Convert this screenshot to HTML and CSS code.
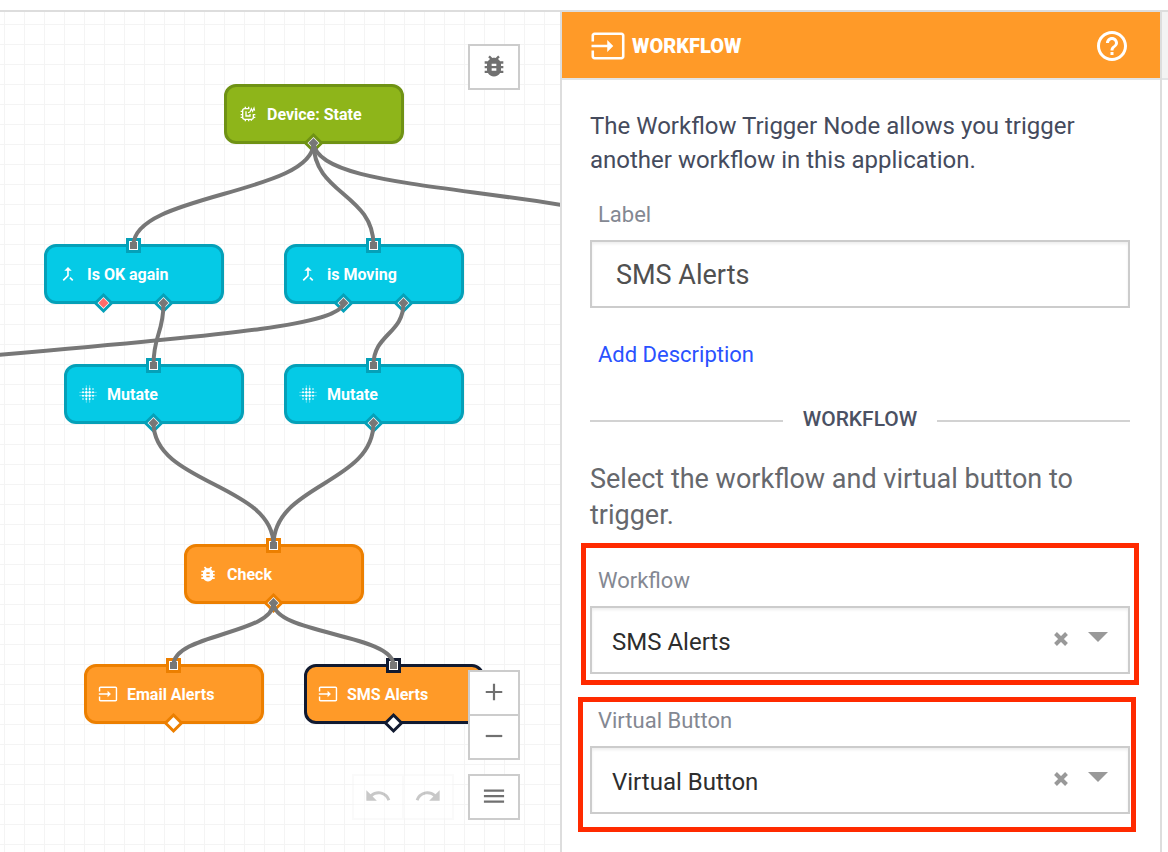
FILE: index.html
```html
<!DOCTYPE html>
<html lang="en">
<head>
<meta charset="utf-8">
<title>Workflow editor</title>
<link rel="stylesheet" href="styles.css">
</head>
<body>
<svg class="defs" aria-hidden="true">
  <symbol id="i-input" viewBox="0 0 24 24"><path d="M21 3H3c-1.100 0-2 .9-2 2v4h1.700V5.200c0-.3.200-.5.500-.5h17.600c.3 0 .5.200.5.500v13.600c0 .3-.2.500-.5.500H3.200a.5.500 0 0 1-.5-.5V15H1v4c0 1.100.9 2 2 2h18c1.100 0 2-.9 2-2V5c0-1.100-.9-2-2-2zM11.500 16l4-4-4-4v3.200H1v1.700h10.500z"/></symbol>
  <symbol id="i-bug" viewBox="0 0 24 24"><path d="M20 8h-2.810c-.45-.78-1.070-1.450-1.820-1.960L17 4.410 15.590 3l-2.170 2.170C12.960 5.060 12.490 5 12 5s-.96.060-1.410.170L8.410 3 7 4.410l1.620 1.630C7.880 6.550 7.260 7.220 6.810 8H4v2h2.090c-.05.330-.09.660-.09 1v1H4v2h2v1c0 .340.040.670.090 1H4v2h2.810c1.040 1.790 2.970 3 5.190 3s4.150-1.210 5.190-3H20v-2h-2.090c.05-.33.090-.66.090-1v-1h2v-2h-2v-1c0-.34-.04-.67-.09-1H20V8zm-6 8h-4v-2h4v2zm0-4h-4v-2h4v2z"/></symbol>
  <symbol id="i-merge" viewBox="0 0 24 24"><path d="M17 20.410L18.410 19 15 15.590 13.590 17 17 20.410zM7.500 8H11v5.590L5.590 19 7 20.410l6-6V8h3.500L12 3.500 7.500 8z"/></symbol>
  <symbol id="i-grid" viewBox="0 0 24 24"><g fill="#fff"><circle cx="10" cy="10" r="1.500"/><circle cx="14" cy="10" r="1.500"/><circle cx="10" cy="14" r="1.500"/><circle cx="14" cy="14" r="1.500"/><circle cx="6" cy="6" r="1"/><circle cx="10" cy="6" r="1.200"/><circle cx="14" cy="6" r="1.200"/><circle cx="18" cy="6" r="1"/><circle cx="6" cy="10" r="1.200"/><circle cx="18" cy="10" r="1.200"/><circle cx="6" cy="14" r="1.200"/><circle cx="18" cy="14" r="1.200"/><circle cx="6" cy="18" r="1"/><circle cx="10" cy="18" r="1.200"/><circle cx="14" cy="18" r="1.200"/><circle cx="18" cy="18" r="1"/></g><path fill="none" stroke="#fff" stroke-width=".7" opacity=".7" d="M1.500 10h21M1.500 14h21M10 1.500v21M14 1.500v21"/></symbol>
  <symbol id="i-chip" viewBox="0 0 24 24"><g fill="none" stroke="#fff" stroke-width="2"><path d="M14 4H7a3 3 0 0 0-3 3v10a3 3 0 0 0 3 3h10a3 3 0 0 0 3-3v-5"/><path d="M9 8v7h6v-3M8 1v3M13 1v3M8 20v3M13 20v3M17 20v2M1 8h3M1 13h3M1 17h3M20 13h3M20 17h3"/><path stroke-width="1.700" d="M12 10l3-1 2-5 2 4 2-5 1 4"/></g></symbol>
  <symbol id="i-help" viewBox="0 0 24 24"><path d="M11 18h2v-2h-2v2zm1-16C6.480 2 2 6.480 2 12s4.480 10 10 10 10-4.480 10-10S17.520 2 12 2zm0 18c-4.410 0-8-3.590-8-8s3.590-8 8-8 8 3.590 8 8-3.590 8-8 8zm0-14c-2.210 0-4 1.790-4 4h2c0-1.100.9-2 2-2s2 .9 2 2c0 2-3 1.750-3 5h2c0-2.250 3-2.500 3-5 0-2.210-1.790-4-4-4z"/></symbol>
  <symbol id="i-undo" viewBox="0 0 24 24"><path d="M12.500 8c-2.650 0-5.050.99-6.900 2.600L2 7v9h9l-3.620-3.620c1.390-1.160 3.160-1.880 5.120-1.880 3.540 0 6.550 2.310 7.600 5.500l2.370-.78C21.080 11.030 17.150 8 12.500 8z"/></symbol>
  <symbol id="i-redo" viewBox="0 0 24 24"><path d="M18.400 10.600C16.550 8.990 14.150 8 11.500 8c-4.650 0-8.580 3.030-9.960 7.220L3.900 16c1.050-3.190 4.050-5.500 7.600-5.500 1.950 0 3.730.72 5.120 1.880L13 16h9V7l-3.600 3.600z"/></symbol>
  <symbol id="s-port" viewBox="0 0 15 15"><path stroke="none" d="M0 0h15v15H0z"/><path fill="#fff" d="M3 3h9v9H3z"/><path fill="#777" d="M4 4h7v7H4z"/></symbol>
</svg>

<header class="topbar"></header>
<div class="app">
  <main class="canvas">
    <div class="node green" style="left:224px;top:72px"><svg class="node-icon"><use href="#i-chip"/></svg>Device: State</div>
    <div class="node blue" style="left:44px;top:232px"><svg class="node-icon"><use href="#i-merge"/></svg>Is OK again</div>
    <div class="node blue" style="left:284px;top:232px"><svg class="node-icon"><use href="#i-merge"/></svg>is Moving</div>
    <div class="node blue" style="left:64px;top:352px"><svg class="node-icon"><use href="#i-grid"/></svg>Mutate</div>
    <div class="node blue" style="left:284px;top:352px"><svg class="node-icon"><use href="#i-grid"/></svg>Mutate</div>
    <div class="node orange" style="left:184px;top:532px"><svg class="node-icon"><use href="#i-bug"/></svg>Check</div>
    <div class="node orange" style="left:84px;top:652px"><svg class="node-icon"><use href="#i-input"/></svg>Email Alerts</div>
    <div class="node orange selected" style="left:304px;top:652px"><svg class="node-icon"><use href="#i-input"/></svg>SMS Alerts</div>

    <svg class="wires" aria-hidden="true">
      <defs>
        <path id="d-out" d="M0-8 8 0 0 8-8 0z" stroke-width="3"/>
        <path id="d-in" d="M0-5 5 0 0 5-5 0z"/>
      </defs>
      <g fill="#05a0b8">
        <use href="#s-port" x="126" y="226" width="15" height="15"/>
        <use href="#s-port" x="366" y="226" width="15" height="15"/>
        <use href="#s-port" x="146" y="346" width="15" height="15"/>
        <use href="#s-port" x="366" y="346" width="15" height="15"/>
      </g>
      <g fill="#ec7f00">
        <use href="#s-port" x="266" y="526" width="15" height="15"/>
        <use href="#s-port" x="166" y="646" width="15" height="15"/>
      </g>
      <g fill="#111a30"><use href="#s-port" x="386" y="646" width="15" height="15"/></g>
      <g fill="#fff">
        <use href="#d-out" x="313.500" y="131" stroke="#6f9214"/>
        <g stroke="#05a0b8">
          <use href="#d-out" x="103.500" y="291"/><use href="#d-out" x="163.500" y="291"/>
          <use href="#d-out" x="343.500" y="291"/><use href="#d-out" x="403.500" y="291"/>
          <use href="#d-out" x="153.500" y="411"/><use href="#d-out" x="373.500" y="411"/>
        </g>
        <use href="#d-out" x="273.500" y="591" stroke="#ec7f00"/>
        <use href="#d-out" x="173.500" y="711" stroke="#ec7f00"/>
        <use href="#d-out" x="393.500" y="711" stroke="#111a30"/>
      </g>
      <use href="#d-in" x="103.500" y="291" fill="#ff6b6b"/>
      <g fill="#777">
        <use href="#d-in" x="313.500" y="131"/><use href="#d-in" x="163.500" y="291"/>
        <use href="#d-in" x="343.500" y="291"/><use href="#d-in" x="403.500" y="291"/>
        <use href="#d-in" x="153.500" y="411"/><use href="#d-in" x="373.500" y="411"/>
        <use href="#d-in" x="273.500" y="591"/>
      </g>
      <g fill="none" stroke="#777" stroke-width="4">
        <path d="M313.500 131C313.500 182 133.500 182 133.500 233"/>
        <path d="M313.500 131C313.500 182 373.500 182 373.500 233"/>
        <path d="M313.500 131C317 168 430 172 562 193"/>
        <path d="M343.500 291C340 312 240 322 -2 343"/>
        <path d="M163.500 291C163.500 322 153.500 322 153.500 353"/>
        <path d="M403.500 291C403.500 322 373.500 322 373.500 353"/>
        <path d="M153.500 411C153.500 472 273.500 472 273.500 533"/>
        <path d="M373.500 411C373.500 472 273.500 472 273.500 533"/>
        <path d="M273.500 591C273.500 622 173.500 622 173.500 653"/>
        <path d="M273.500 591C273.500 622 393.500 622 393.500 653"/>
      </g>
    </svg>

    <div class="tools tools-top">
      <button class="tool" aria-label="Debug"><svg class="tool-icon bug"><use href="#i-bug"/></svg></button>
    </div>
    <div class="tools tools-bottom">
      <div class="stack">
        <button class="tool" aria-label="Zoom in"><svg class="tool-icon" viewBox="0 0 24 24"><path d="M10.800 3h2.400v7.800H21v2.400h-7.800V21h-2.400v-7.800H3v-2.400h7.800z"/></svg></button>
        <button class="tool" aria-label="Zoom out"><svg class="tool-icon" viewBox="0 0 24 24"><path d="M3 10.800h18v2.400H3z"/></svg></button>
      </div>
      <div class="tool-row">
        <div class="history">
          <button class="tool" disabled aria-label="Undo"><svg class="history-icon"><use href="#i-undo"/></svg></button>
          <button class="tool" disabled aria-label="Redo"><svg class="history-icon"><use href="#i-redo"/></svg></button>
        </div>
        <button class="tool" aria-label="Menu"><svg class="tool-icon" viewBox="0 0 24 24"><path d="M1 5h22v2.300H1zM1 11h22v2.300H1zM1 17h22v2.300H1z"/></svg></button>
      </div>
    </div>
  </main>

  <aside class="panel">
    <header class="panel-head">
      <svg class="head-icon"><use href="#i-input"/></svg>
      <h1 class="panel-title">WORKFLOW</h1>
      <button class="help" aria-label="Help"><svg class="help-icon"><use href="#i-help"/></svg></button>
    </header>
    <div class="panel-body">
      <p class="intro">The Workflow Trigger Node allows you trigger another workflow in this application.</p>
      <div class="field">
        <label class="label" for="node-label">Label</label>
        <input class="box text-input" id="node-label" type="text" value="SMS Alerts">
      </div>
      <a class="link" href="#">Add Description</a>
      <h2 class="divider">WORKFLOW</h2>
      <p class="hint">Select the workflow and virtual button to trigger.</p>
      <div class="field marked">
        <label class="label" for="workflow">Workflow</label>
        <div class="select-wrap">
          <select class="box select" id="workflow"><option>SMS Alerts</option></select>
          <button class="clear" aria-label="Clear workflow"><svg class="clear-icon" viewBox="0 0 14 14"><path d="M1.500 1.500l11 11M12.500 1.500l-11 11"/></svg></button>
          <span class="caret"></span>
        </div>
      </div>
      <div class="field marked second">
        <label class="label" for="button">Virtual Button</label>
        <div class="select-wrap">
          <select class="box select" id="button"><option>Virtual Button</option></select>
          <button class="clear" aria-label="Clear virtual button"><svg class="clear-icon" viewBox="0 0 14 14"><path d="M1.500 1.500l11 11M12.500 1.500l-11 11"/></svg></button>
          <span class="caret"></span>
        </div>
      </div>
    </div>
  </aside>
  <div class="rail"><div class="rail-head"></div></div>
</div>
</body>
</html>
```
FILE: styles.css
```css
* { box-sizing: border-box; }
html, body { height: 100%; }
body {
  margin: 0;
  display: flex;
  flex-direction: column;
  background: #fff;
  font-family: Roboto, "Noto Sans", sans-serif;
  overflow: hidden;
}
button, input, select { font: inherit; }
button { padding: 0; cursor: pointer; }
.defs { position: absolute; width: 0; height: 0; }

.topbar { flex: none; height: 12px; border-bottom: 2px solid #ddd; }
.app { flex: 1; min-height: 0; display: flex; }

/* Canvas */
.canvas {
  flex: 1;
  min-width: 0;
  position: relative;
  overflow: hidden;
  background-color: #fff;
  background-image:
    linear-gradient(to right, #f4f4f4 1px, transparent 1px),
    linear-gradient(to bottom, #f4f4f4 1px, transparent 1px);
  background-size: 20px 20px;
  background-position: 4px 12px;
}
.node {
  position: absolute;
  display: flex;
  align-items: center;
  gap: 9px;
  width: 180px;
  height: 60px;
  padding: 0 11px;
  border: 3px solid;
  border-radius: 12px;
  color: #fff;
  font-size: 16px;
  font-weight: 700;
  white-space: nowrap;
}
.green { background: #8eb51a; border-color: #6f9214; }
.blue { background: #05cae6; border-color: #05a0b8; }
.orange { background: #ff9a28; border-color: #ec7f00; }
.selected { border-color: #111a30; }
.node-icon { width: 20px; height: 20px; fill: #fff; }
.green .node-icon { padding: 2px; }
.wires { position: absolute; inset: 0; width: 100%; height: 100%; pointer-events: none; }

.tools { position: absolute; right: 40px; }
.tools-top { top: 32px; }
.tools-bottom { bottom: 32px; display: flex; flex-direction: column; align-items: flex-end; gap: 14px; }
.stack { display: flex; flex-direction: column; }
.stack .tool + .tool { margin-top: -2px; }
.tool-row { display: flex; gap: 14px; }
.history { display: flex; opacity: .4; }
.history .tool { border-color: #f4f4f4; }
.history .tool + .tool { margin-left: -2px; }
.tool {
  display: flex;
  align-items: center;
  justify-content: center;
  width: 52px;
  height: 46px;
  padding-bottom: 2px;
  background: #fff;
  border: 2px solid #ccc;
}
.tool-icon { width: 22px; height: 22px; fill: #707070; }
.tool-icon.bug { width: 28px; height: 28px; }
.history-icon { width: 28px; height: 28px; fill: #777; }

/* Settings panel */
.panel { flex: none; width: 602px; border: solid #ddd; border-width: 0 2px; background: #fff; }
.panel-head {
  display: flex;
  align-items: center;
  gap: 6px;
  height: 68px;
  padding: 2px 30px 0 28px;
  background: #ff9a28;
  border-bottom: 2px solid #e2e4e6;
  color: #fff;
}
.head-icon { width: 36px; height: 36px; fill: #fff; }
.panel-title { margin: 0; font-size: 20px; font-weight: 900; }
.help { margin-left: auto; display: flex; border: 0; background: none; color: #fff; }
.help-icon { width: 36px; height: 36px; fill: #fff; }
.panel-body { padding: 29px 30px 0 28px; }
.intro { margin: 0 0 24px; font-size: 24px; line-height: 34px; color: #454b5d; }
.field { display: flex; flex-direction: column; gap: 11px; }
.label { padding-left: 8px; font-size: 22px; line-height: 28px; color: #848892; }
.box {
  width: 100%;
  height: 68px;
  border: 2px solid #ccc;
  border-radius: 0;
  background: #fff;
  box-shadow: inset 0 2px 3px #eee;
}
.text-input { padding: 2px 24px 0; font-size: 27px; color: #505050; }
.link { display: block; margin: 33px 0 35px; padding-left: 8px; font-size: 22px; line-height: 28px; color: #2a52ff; text-decoration: none; }
.divider {
  display: flex;
  align-items: center;
  gap: 20px;
  margin: 0 0 27px;
  font-size: 21px;
  font-weight: 500;
  line-height: 30px;
  color: #4b5163;
}
.divider::before, .divider::after { content: ""; flex: 1; height: 2px; margin-top: 4px; background: #d2d2d2; }
.hint { margin: 0 0 34px; font-size: 27px; line-height: 36px; color: #66686d; }

.select-wrap { position: relative; }
.select { display: block; appearance: none; padding: 3px 80px 0 20px; font-size: 24px; color: #2d2d2d; }
.clear { position: absolute; right: 62px; top: 26px; display: flex; border: 0; background: none; }
.clear-icon { width: 14px; height: 14px; fill: none; stroke: #999; stroke-width: 4; }
.caret {
  position: absolute;
  right: 22px;
  top: 26px;
  border: 10px solid transparent;
  border-top-color: #999;
  border-bottom: 0;
}

/* Red highlight frames round the fields */
.marked { position: relative; }
.marked + .marked { margin-top: 33px; }
.marked::after {
  content: "";
  position: absolute;
  inset: -24px -9px -11px -9px;
  border: 5px solid #ff2a00;
  pointer-events: none;
}
.marked.second::after { inset: -10px -6px -18px -12px; }

.rail { flex: none; width: 6px; }
.rail-head { height: 68px; background: #f3f3f3; border-bottom: 2px solid #e2e4e6; }
```
